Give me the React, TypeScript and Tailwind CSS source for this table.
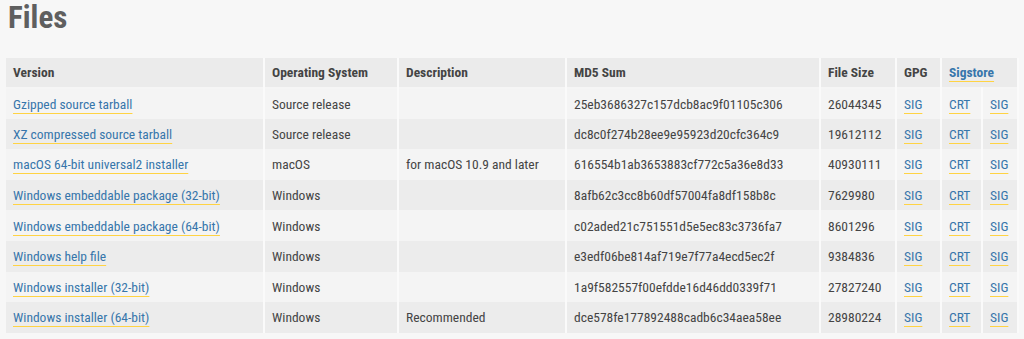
const rows = [
  { name: 'Gzipped source tarball', os: 'Source release', desc: '', md5: '25eb3686327c157dcb8ac9f01105c306', size: '26044345' },
  { name: 'XZ compressed source tarball', os: 'Source release', desc: '', md5: 'dc8c0f274b28ee9e95923d20cfc364c9', size: '19612112' },
  { name: 'macOS 64-bit universal2 installer', os: 'macOS', desc: 'for macOS 10.9 and later', md5: '616554b1ab3653883cf772c5a36e8d33', size: '40930111' },
  { name: 'Windows embeddable package (32-bit)', os: 'Windows', desc: '', md5: '8afb62c3cc8b60df57004fa8df158b8c', size: '7629980' },
  { name: 'Windows embeddable package (64-bit)', os: 'Windows', desc: '', md5: 'c02aded21c751551d5e5ec83c3736fa7', size: '8601296' },
  { name: 'Windows help file', os: 'Windows', desc: '', md5: 'e3edf06be814af719e7f77a4ecd5ec2f', size: '9384836' },
  { name: 'Windows installer (32-bit)', os: 'Windows', desc: '', md5: '1a9f582557f00efdde16d46dd0339f71', size: '27827240' },
  { name: 'Windows installer (64-bit)', os: 'Windows', desc: 'Recommended', md5: 'dce578fe177892488cadb6c34aea58ee', size: '28980224' },
]

const Link = ({ children }: { children: React.ReactNode }) => (
  <a href="#" className="text-[#3776ab] underline decoration-[#ffd343] underline-offset-[4px]">
    {children}
  </a>
)

const th = 'px-[7px] text-left font-bold border-r-2 border-[#fafafa] whitespace-nowrap'
const td = 'px-[7px] border-r-2 border-[#fafafa] whitespace-nowrap'

export default function App() {
  return (
    <div className="min-h-screen bg-[#f7f7f7] text-[#444] font-['Roboto','Liberation_Sans',sans-serif]">
      <h2 className="pl-[8px] pt-[3px] text-[31px] leading-[30px] font-bold text-[#5f5f5f] font-stretch-[85%]">Files</h2>
      <div className="px-[6px] pt-[25px]">
        <table className="w-[1012px] table-fixed border-collapse text-[13.5px] font-stretch-[87%]">
          <colgroup>
            <col className="w-[258px]" />
            <col className="w-[134px]" />
            <col className="w-[168px]" />
            <col className="w-[254px]" />
            <col className="w-[76px]" />
            <col className="w-[45px]" />
            <col className="w-[41px]" />
            <col className="w-[36px]" />
          </colgroup>
          <thead>
            <tr className="h-[30px] bg-[#ebebeb] border-b-2 border-[#f5f5f5]">
              <th className={th}>Version</th>
              <th className={th}>Operating System</th>
              <th className={th}>Description</th>
              <th className={th}>MD5 Sum</th>
              <th className={th}>File Size</th>
              <th className={th}>GPG</th>
              <th className={th} colSpan={2}>
                <Link>Sigstore</Link>
              </th>
            </tr>
          </thead>
          <tbody>
            {rows.map((r, i) => (
              <tr key={r.md5} className={`h-[30.6px] ${i % 2 === 0 ? 'bg-[#f4f4f4]' : 'bg-[#ececec]'}`}>
                <td className={td}>
                  <Link>{r.name}</Link>
                </td>
                <td className={td}>{r.os}</td>
                <td className={td}>{r.desc}</td>
                <td className={td}>{r.md5}</td>
                <td className={td}>{r.size}</td>
                <td className={td}>
                  <Link>SIG</Link>
                </td>
                <td className={td}>
                  <Link>CRT</Link>
                </td>
                <td className={td}>
                  <Link>SIG</Link>
                </td>
              </tr>
            ))}
          </tbody>
        </table>
      </div>
    </div>
  )
}
